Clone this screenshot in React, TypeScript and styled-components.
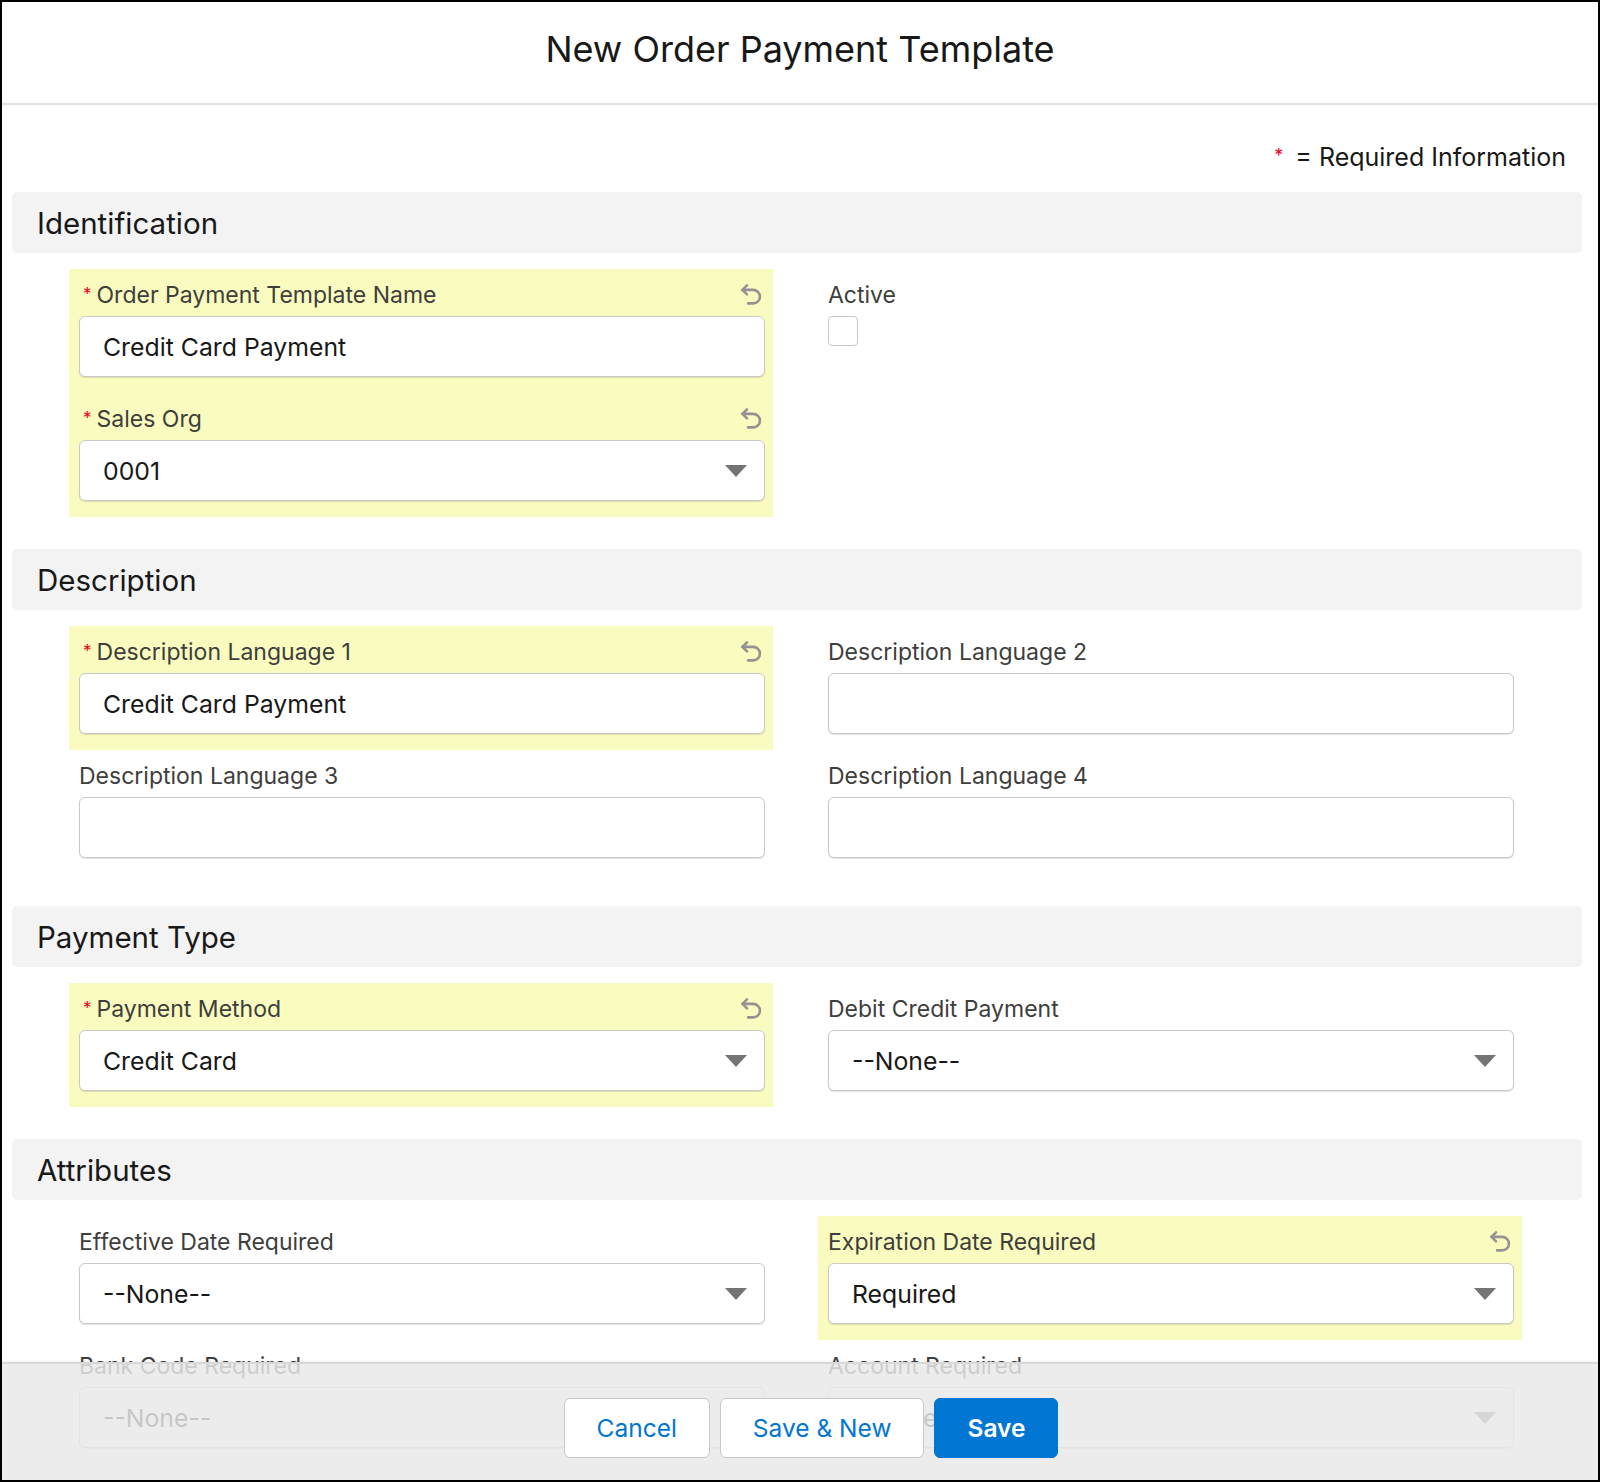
import styled, { createGlobalStyle } from "styled-components"

const GlobalStyle = createGlobalStyle`
  html, body {
    margin: 0;
    padding: 0;
    background: #fff;
  }
  body {
    font-family: Inter, "Noto Sans", "Liberation Sans", sans-serif;
    color: #181818;
  }
  * {
    box-sizing: border-box;
  }
`

const Modal = styled.div`
  position: relative;
  width: 1600px;
  height: 1482px;
  border: 2px solid #000;
  overflow: hidden;
  background: #fff;
`

const Header = styled.header`
  height: 103px;
  display: flex;
  align-items: center;
  justify-content: center;
  border-bottom: 2px solid #e3e3e3;
  box-shadow: 0 1px 1px rgba(0, 0, 0, 0.03);
`

const Title = styled.h1`
  margin: 0;
  font-size: 36px;
  font-weight: 400;
  color: #181818;
  padding-bottom: 8px;
`

const Body = styled.div`
  padding: 0 16px 0 10px;
`

const RequiredNote = styled.div`
  margin-top: 36px;
  margin-bottom: 20px;
  padding-right: 16px;
  text-align: right;
  font-size: 25px;
  line-height: 30px;
  color: #181818;
  span {
    color: #ea001e;
    font-size: 18px;
    margin-right: 12px;
    vertical-align: 4px;
  }
`

const Section = styled.section`
  margin-bottom: 32px;
`

const SectionBar = styled.div`
  height: 61px;
  display: flex;
  align-items: center;
  padding-left: 25px;
  background: #f3f3f3;
  border-radius: 5px;
  font-size: 29.5px;
  color: #181818;
  margin-bottom: 16px;
`

const FieldGrid = styled.div`
  display: grid;
  grid-template-columns: 704px 704px;
  column-gap: 45px;
  padding-left: 57px;
`

const Field = styled.div<{ $edited?: boolean }>`
  padding: 12px 8px 16px 10px;
  background: ${p => (p.$edited ? "#f9fbbf" : "transparent")};
`

const LabelRow = styled.div`
  height: 28px;
  display: flex;
  align-items: center;
  justify-content: space-between;
  margin-bottom: 7px;
`

const Label = styled.label`
  font-size: 23px;
  color: #3e3e3c;
  white-space: nowrap;
`

const Star = styled.span`
  color: #ea001e;
  font-size: 17px;
  margin: 0 5px 0 4px;
  vertical-align: 3px;
`

const UndoButton = styled.span`
  display: flex;
  width: 27px;
  height: 27px;
  margin-right: 0;
  color: #939393;
`

const Input = styled.div`
  height: 61px;
  display: flex;
  align-items: center;
  justify-content: space-between;
  padding: 0 17px 0 23px;
  background: #fff;
  border: 1px solid #c9c9c9;
  border-radius: 6px;
  box-shadow: 0 1px 1px rgba(0, 0, 0, 0.12);
  font-size: 24.8px;
  color: #181818;
`

const Caret = styled.span`
  width: 0;
  height: 0;
  border-left: 11px solid transparent;
  border-right: 11px solid transparent;
  border-top: 12px solid #747474;
`

const Checkbox = styled.span`
  display: block;
  width: 30px;
  height: 30px;
  border: 1px solid #c9c9c9;
  border-radius: 4px;
  background: #fff;
`

const Footer = styled.footer`
  position: absolute;
  left: 0;
  right: 0;
  bottom: 0;
  height: 118px;
  display: flex;
  justify-content: center;
  align-items: flex-start;
  gap: 10px;
  padding: 34px 0 0 22px;
  background: rgba(232, 232, 232, 0.84);
  border-top: 2px solid #d8d8d8;
  box-shadow: 0 -1px 2px rgba(0, 0, 0, 0.06);
`

const Button = styled.button<{ $brand?: boolean }>`
  height: 60px;
  padding: 0 32px;
  font-family: inherit;
  font-size: 24.5px;
  border-radius: 6px;
  border: 1px solid ${p => (p.$brand ? "#0176d3" : "#c9c9c9")};
  background: ${p => (p.$brand ? "#0176d3" : "#fff")};
  color: ${p => (p.$brand ? "#fff" : "#0176d3")};
  font-weight: ${p => (p.$brand ? 600 : 400)};
  cursor: pointer;
`

const UndoIcon = () => (
  <svg width="27" height="27" viewBox="0 0 24 24" fill="none" stroke="currentColor" strokeWidth="2.3" strokeLinecap="round" strokeLinejoin="round">
    <path d="M8 3 4 7l4 4" />
    <path d="M4 7h9.5a6 6 0 0 1 0 12H9" />
  </svg>
)

type FieldDef = {
  label: string
  value?: string
  required?: boolean
  edited?: boolean
  select?: boolean
  checkbox?: boolean
  empty?: boolean
}

type SectionDef = {
  title: string
  fields: FieldDef[]
}

const sections: SectionDef[] = [
  {
    title: "Identification",
    fields: [
      { label: "Order Payment Template Name", value: "Credit Card Payment", required: true, edited: true },
      { label: "Active", checkbox: true },
      { label: "Sales Org", value: "0001", required: true, edited: true, select: true },
      { label: "", empty: true },
    ],
  },
  {
    title: "Description",
    fields: [
      { label: "Description Language 1", value: "Credit Card Payment", required: true, edited: true },
      { label: "Description Language 2", value: "" },
      { label: "Description Language 3", value: "" },
      { label: "Description Language 4", value: "" },
    ],
  },
  {
    title: "Payment Type",
    fields: [
      { label: "Payment Method", value: "Credit Card", required: true, edited: true, select: true },
      { label: "Debit Credit Payment", value: "--None--", select: true },
    ],
  },
  {
    title: "Attributes",
    fields: [
      { label: "Effective Date Required", value: "--None--", select: true },
      { label: "Expiration Date Required", value: "Required", edited: true, select: true },
      { label: "Bank Code Required", value: "--None--", select: true },
      { label: "Account Required", value: "--None--", select: true },
    ],
  },
]

const FormField = ({ field }: { field: FieldDef }) => {
  if (field.empty) return <div />
  return (
    <Field $edited={field.edited}>
      <LabelRow>
        <Label>
          {field.required && <Star>*</Star>}
          {field.label}
        </Label>
        {field.edited && (
          <UndoButton>
            <UndoIcon />
          </UndoButton>
        )}
      </LabelRow>
      {field.checkbox ? (
        <Checkbox />
      ) : (
        <Input>
          <span>{field.value}</span>
          {field.select && <Caret />}
        </Input>
      )}
    </Field>
  )
}

const App = () => {
  return (
    <Modal>
      <GlobalStyle />
      <Header>
        <Title>New Order Payment Template</Title>
      </Header>
      <Body>
        <RequiredNote>
          <span>*</span>= Required Information
        </RequiredNote>
        {sections.map(section => (
          <Section key={section.title}>
            <SectionBar>{section.title}</SectionBar>
            <FieldGrid>
              {section.fields.map((field, i) => (
                <FormField key={i} field={field} />
              ))}
            </FieldGrid>
          </Section>
        ))}
      </Body>
      <Footer>
        <Button>Cancel</Button>
        <Button>Save &amp; New</Button>
        <Button $brand>Save</Button>
      </Footer>
    </Modal>
  )
}

export default App
